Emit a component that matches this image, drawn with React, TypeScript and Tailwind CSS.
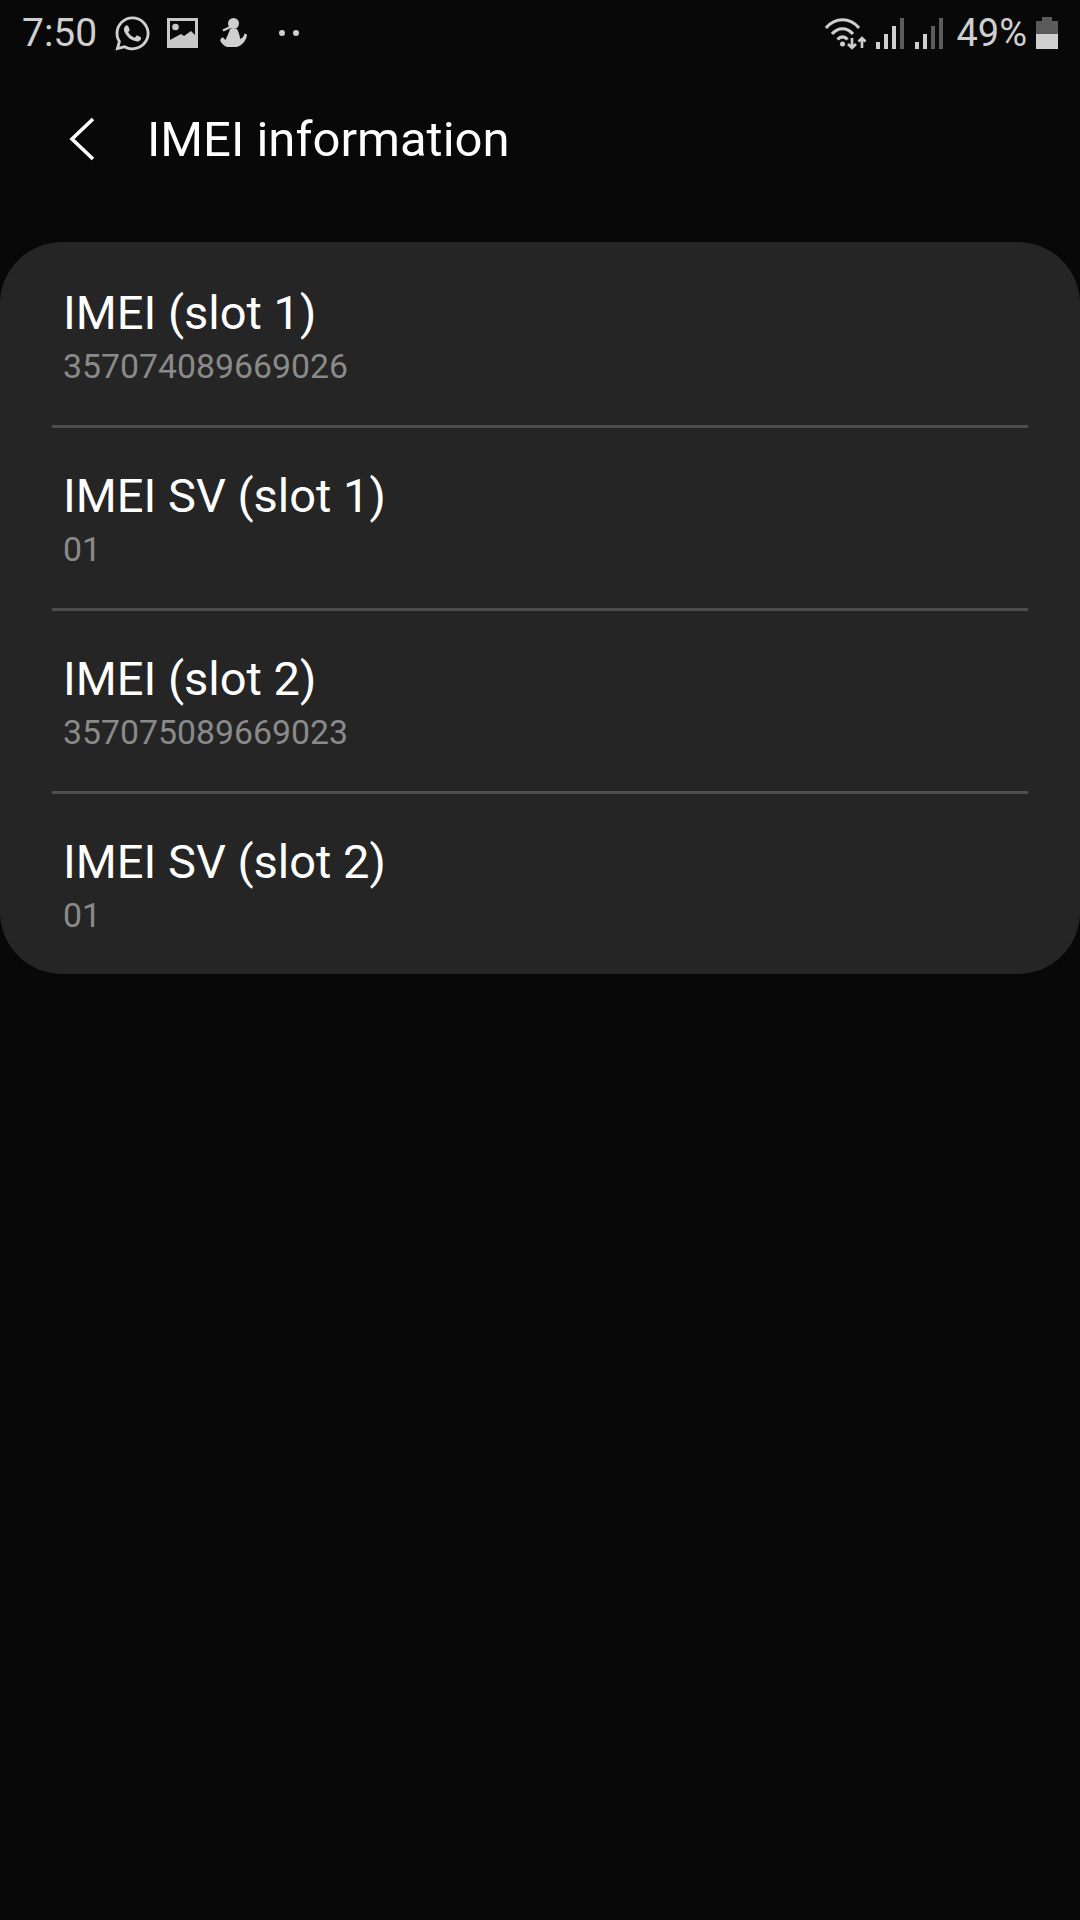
import React from 'react'
import { FaWhatsapp } from 'react-icons/fa'

const rows = [
  { title: 'IMEI (slot 1)', value: '357074089669026' },
  { title: 'IMEI SV (slot 1)', value: '01' },
  { title: 'IMEI (slot 2)', value: '357075089669023' },
  { title: 'IMEI SV (slot 2)', value: '01' },
]

function GalleryIcon() {
  return (
    <svg width="31" height="30" viewBox="0 0 31 30">
      <rect width="31" height="30" fill="#c8c8c8" />
      <path fill="#0a0a0a" d="M3 3H28V17L24 13L17 18L14 16L3 22Z" />
      <circle cx="8.5" cy="9" r="3.3" fill="#c8c8c8" />
    </svg>
  )
}

function PersonIcon() {
  return (
    <svg width="28" height="30" viewBox="0 0 28 30">
      <circle cx="14.5" cy="5.5" r="5.5" fill="#cfcfcf" />
      <path stroke="#cfcfcf" strokeWidth="2.4" fill="none" d="M4 12.5L11.5 9" />
      <path
        fill="#cfcfcf"
        d="M11 11H18C20 15 21 18 21 21C23 20.5 25 18.5 25.5 15.5L28 16.5C27.5 22 24 27 18 29H8C5 28 2 25 1 22L3.5 19L6.5 22C8 18 10 15 11 11Z"
      />
    </svg>
  )
}

function WifiIcon() {
  return (
    <svg width="42" height="33" viewBox="0 0 42 33" fill="none">
      <path stroke="#cfcfcf" strokeWidth="3.2" d="M1 11C10 0 25 0 34 11" />
      <path stroke="#cfcfcf" strokeWidth="3.2" d="M7 17C13 10 22 10 28 17" />
      <path stroke="#cfcfcf" strokeWidth="3.2" d="M12.5 22.5C15.5 19 19.5 19 22.5 22.5" />
      <circle cx="17.5" cy="27" r="2.5" fill="#cfcfcf" />
      <path stroke="#cfcfcf" strokeWidth="2.6" d="M27 21V31M23 27L27 31L31 27" />
      <path stroke="#cfcfcf" strokeWidth="2.6" d="M37 31V21M33.5 24.5L37 21L40.5 24.5" />
    </svg>
  )
}

function SignalIcon({ third }: { third: string }) {
  return (
    <svg width="28" height="31" viewBox="0 0 28 31">
      <rect x="0" y="24" width="4" height="7" fill="#cfcfcf" />
      <rect x="8" y="16" width="4" height="15" fill="#cfcfcf" />
      <rect x="16" y="8" width="4" height="23" fill={third} />
      <rect x="24" y="0" width="4" height="31" fill="#5c5c5c" />
    </svg>
  )
}

function BatteryIcon() {
  return (
    <svg width="22" height="33" viewBox="0 0 22 33">
      <path fill="#5a5a5a" d="M6 0H16V4H22V17H0V4H6Z" />
      <rect x="0" y="17" width="22" height="15" fill="#cfcfcf" />
    </svg>
  )
}

export default function App() {
  return (
    <div className="w-[1080px] h-[1920px] bg-[#080808] overflow-hidden font-['Roboto',sans-serif]">
      {/* status bar */}
      <div className="flex items-center justify-between h-[66px] pl-[22px] pr-[22px] text-[#cfcfcf]">
        <div className="flex items-center">
          <span className="text-[39px] leading-none w-[91px]">7:50</span>
          <FaWhatsapp className="w-[39px] h-[39px] mr-[15px]" />
          <GalleryIcon />
          <div className="ml-[21px]">
            <PersonIcon />
          </div>
          <div className="flex gap-[8px] ml-[32px]">
            <div className="w-[6px] h-[6px] rounded-full bg-[#cfcfcf]" />
            <div className="w-[6px] h-[6px] rounded-full bg-[#cfcfcf]" />
          </div>
        </div>
        <div className="flex items-center">
          <WifiIcon />
          <div className="ml-[9px]">
            <SignalIcon third="#cfcfcf" />
          </div>
          <div className="ml-[11px]">
            <SignalIcon third="#5c5c5c" />
          </div>
          <span className="text-[38px] leading-none ml-[13px] mr-[9px]">49%</span>
          <BatteryIcon />
        </div>
      </div>

      {/* header */}
      <div className="flex items-center h-[146px]">
        <svg className="ml-[68px]" width="28" height="44" viewBox="0 0 28 44" fill="none">
          <path stroke="#ffffff" strokeWidth="3.6" d="M25 2L4 22L25 42" />
        </svg>
        <h1 className="ml-[51px] text-[49px] leading-none font-normal text-white">IMEI information</h1>
      </div>

      {/* list card */}
      <div className="mt-[30px] h-[732px] pt-[3px] bg-[#252525] rounded-[62px]">
        {rows.map((row, i) => (
          <div key={i} className="h-[183px] flex flex-col pt-[40px]">
            <div className="pl-[63px] text-[47px] leading-[56px] text-white">{row.title}</div>
            <div className="pl-[63px] text-[33.8px] leading-[40px] mt-[6px] text-[#8a8a8a]">{row.value}</div>
            {i < rows.length - 1 && <div className="mt-auto mx-[52px] h-[3px] bg-[#4e4e4e]" />}
          </div>
        ))}
      </div>
    </div>
  )
}
